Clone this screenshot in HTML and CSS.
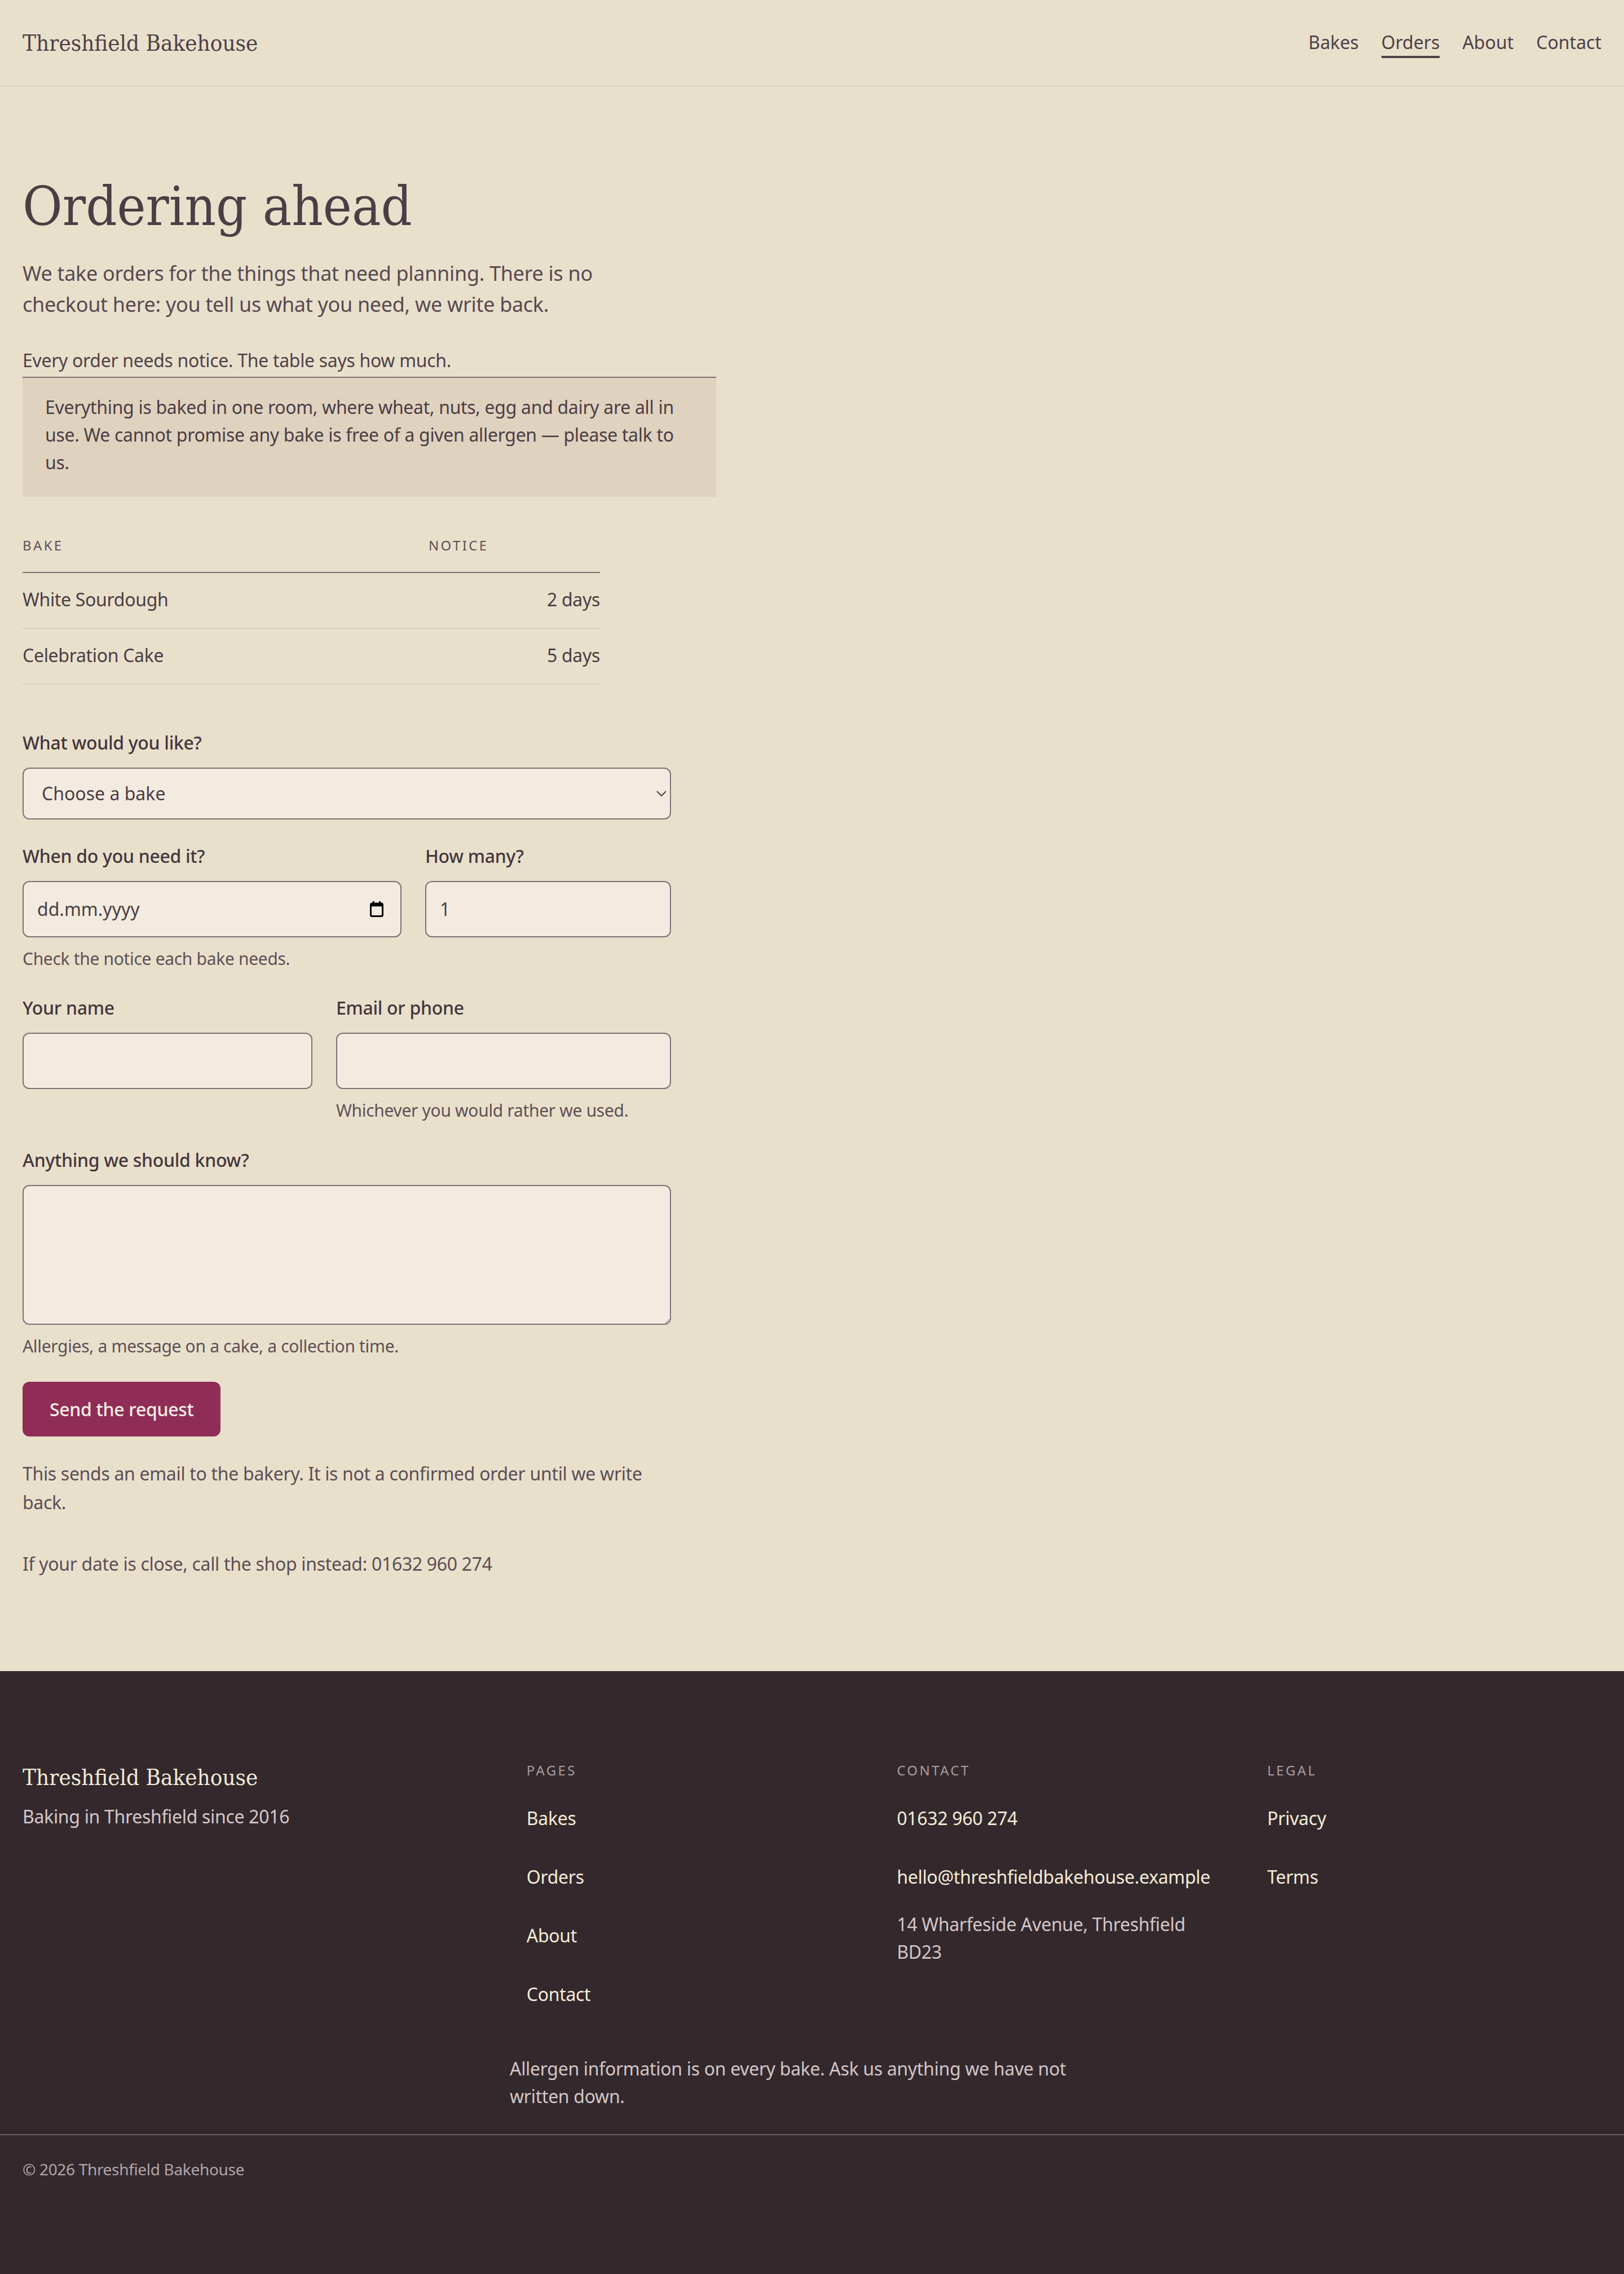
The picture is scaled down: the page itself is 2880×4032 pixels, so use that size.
FILE: index.html
```html
<!DOCTYPE html>
<html lang="en-GB">
<head>
<meta charset="utf-8">
<title>Ordering ahead — Threshfield Bakehouse</title>
<link rel="stylesheet" href="styles.css">
</head>
<body>
<header class="site-header">
  <a class="logo" href="#">Threshfield Bakehouse</a>
  <nav class="main-nav" aria-label="Main">
    <a href="#">Bakes</a>
    <a href="#" class="is-current" aria-current="page">Orders</a>
    <a href="#">About</a>
    <a href="#">Contact</a>
  </nav>
</header>

<main class="page">
  <h1 class="page-title">Ordering ahead</h1>
  <p class="lede">We take orders for the things that need planning. There is no checkout here: you tell us what you need, we write back.</p>

  <p class="caption">Every order needs notice. The table says how much.</p>
  <aside class="allergen-note">
    <p>Everything is baked in one room, where wheat, nuts, egg and dairy are all in use. We cannot promise any bake is free of a given allergen — please talk to us.</p>
  </aside>

  <table class="notice-table">
    <thead>
      <tr><th class="col-bake">Bake</th><th class="col-notice">Notice</th></tr>
    </thead>
    <tbody>
      <tr><td>White Sourdough</td><td class="num">2 days</td></tr>
      <tr><td>Celebration Cake</td><td class="num">5 days</td></tr>
    </tbody>
  </table>

  <form class="order-form" action="#">
    <div class="field">
      <label class="field-label" for="bake">What would you like?</label>
      <select id="bake" class="control control--select">
        <option>Choose a bake</option>
        <option>White Sourdough</option>
        <option>Celebration Cake</option>
      </select>
    </div>

    <div class="field-row field-row--date">
      <div class="field">
        <label class="field-label" for="date">When do you need it?</label>
        <div class="date-wrap">
          <input id="date" class="control" type="text" placeholder="dd.mm.yyyy">
          <svg class="date-icon" width="12" height="14" viewBox="0 0 12 14" aria-hidden="true">
            <rect x="0.75" y="2" width="10.5" height="11.25" rx="1.2" fill="none" stroke="#000" stroke-width="1.5"/>
            <rect x="0.75" y="2" width="10.5" height="2.6" fill="#000"/>
            <rect x="2.4" y="0" width="1.6" height="3.2" fill="#000"/>
            <rect x="8" y="0" width="1.6" height="3.2" fill="#000"/>
          </svg>
        </div>
        <p class="hint">Check the notice each bake needs.</p>
      </div>
      <div class="field">
        <label class="field-label" for="qty">How many?</label>
        <input id="qty" class="control" type="number" value="1" min="1">
      </div>
    </div>

    <div class="field-row field-row--contact">
      <div class="field">
        <label class="field-label" for="name">Your name</label>
        <input id="name" class="control" type="text">
      </div>
      <div class="field">
        <label class="field-label" for="reach">Email or phone</label>
        <input id="reach" class="control" type="text">
        <p class="hint">Whichever you would rather we used.</p>
      </div>
    </div>

    <div class="field">
      <label class="field-label" for="notes">Anything we should know?</label>
      <textarea id="notes" class="control control--area" rows="4"></textarea>
      <p class="hint">Allergies, a message on a cake, a collection time.</p>
    </div>

    <button class="submit" type="submit">Send the request</button>
  </form>

  <p class="form-note">This sends an email to the bakery. It is not a confirmed order until we write back.</p>
  <p class="form-note form-note--call">If your date is close, call the shop instead: 01632 960 274</p>
</main>

<footer class="site-footer">
  <div class="footer-main">
    <div class="footer-grid">
      <div class="footer-brand">
        <p class="footer-brand-name">Threshfield Bakehouse</p>
        <p class="footer-tagline">Baking in Threshfield since 2016</p>
      </div>
      <nav class="footer-col" aria-label="Pages">
        <h2 class="footer-heading">Pages</h2>
        <ul class="footer-links">
          <li><a href="#">Bakes</a></li>
          <li><a href="#">Orders</a></li>
          <li><a href="#">About</a></li>
          <li><a href="#">Contact</a></li>
        </ul>
      </nav>
      <div class="footer-col">
        <h2 class="footer-heading">Contact</h2>
        <ul class="footer-links">
          <li><a href="#">01632 960 274</a></li>
          <li><a href="#">hello@threshfieldbakehouse.example</a></li>
        </ul>
        <p class="footer-address">14 Wharfeside Avenue, Threshfield BD23</p>
      </div>
      <nav class="footer-col" aria-label="Legal">
        <h2 class="footer-heading">Legal</h2>
        <ul class="footer-links">
          <li><a href="#">Privacy</a></li>
          <li><a href="#">Terms</a></li>
        </ul>
      </nav>
    </div>
    <p class="footer-note">Allergen information is on every bake. Ask us anything we have not written down.</p>
  </div>
  <div class="footer-bottom">
    <p>© 2026 Threshfield Bakehouse</p>
  </div>
</footer>
</body>
</html>
```

FILE: styles.css
```css
html {
  zoom: 2;
  background: #33292d;
}

body {
  margin: 0;
  font-family: "Noto Sans", "Liberation Sans", sans-serif;
  font-size: 16px;
  line-height: 1.53;
  letter-spacing: -0.01em;
  color: #4a3d43;
  background: #e9e0cc;
}

/* Header */
.site-header {
  display: flex;
  justify-content: space-between;
  align-items: center;
  padding: 24px 20px;
  border-bottom: 1px solid #dcd2c0;
}

.logo {
  font-family: "DejaVu Serif Condensed", "DejaVu Serif", serif;
  font-stretch: condensed;
  font-size: 20px;
  line-height: 28px;
  letter-spacing: 0;
  color: #4b3f45;
  text-decoration: none;
}

.main-nav {
  display: flex;
  gap: 20px;
}

.main-nav a {
  display: inline-block;
  line-height: 24.5px;
  letter-spacing: 0;
  color: #4d4147;
  text-decoration: none;
  border-bottom: 2px solid transparent;
}

.main-nav a.is-current {
  border-bottom-color: #4d4147;
}

/* Main */
.page {
  padding: 80px 20px 82.5px;
}

.page-title {
  font-family: "DejaVu Serif Condensed", "DejaVu Serif", serif;
  font-stretch: condensed;
  font-size: 48px;
  line-height: 1.1;
  font-weight: 400;
  letter-spacing: 0;
  color: #4b3f45;
  margin: 0 0 18.6px;
}

.lede {
  font-size: 18px;
  line-height: 1.53;
  max-width: 560px;
  margin: 0 0 24px;
  color: #574a50;
}

.caption {
  margin: 0 0 2px;
  color: #4f4248;
}

.allergen-note {
  box-sizing: border-box;
  max-width: 615px;
  background: #dfd2bf;
  border-top: 1px solid #7f7074;
  padding: 14px 20px 18px;
}

.allergen-note p {
  margin: 0;
}

/* Table */
.notice-table {
  width: 512px;
  table-layout: fixed;
  border-collapse: collapse;
  margin-top: 22px;
}

.notice-table th {
  text-align: left;
  font-size: 12px;
  line-height: 18.4px;
  font-weight: 400;
  letter-spacing: 0.14em;
  text-transform: uppercase;
  color: #5d5055;
  padding: 12px 0 14px;
  border-bottom: 1px solid #7f7074;
}

.notice-table .col-bake {
  width: 360px;
}

.notice-table td {
  padding: 11px 0 13px;
  line-height: 24.5px;
  border-bottom: 1px solid #d8cdbb;
}

.notice-table td.num {
  text-align: right;
}

/* Form */
.order-form {
  display: flex;
  flex-direction: column;
  gap: 20px;
  max-width: 575px;
  margin-top: 39px;
}

.field {
  display: flex;
  flex-direction: column;
  min-width: 0;
}

.field-row {
  display: grid;
  gap: 21px;
}

.field-row--date {
  grid-template-columns: 1fr 218px;
}

.field-row--contact {
  grid-template-columns: 257px 1fr;
}

.field-label {
  display: block;
  font-weight: 500;
  line-height: 24.5px;
  color: #43363c;
  margin-bottom: 10px;
}

.control {
  box-sizing: border-box;
  width: 100%;
  height: 50px;
  margin: 0;
  padding: 12px;
  font: inherit;
  line-height: 24px;
  letter-spacing: 0;
  color: #4a3d43;
  background: #f3ebe0;
  border: 1px solid #7f7175;
  border-radius: 6px;
}

.control::placeholder {
  color: #4a3d43;
  opacity: 1;
}

.control--select {
  height: 46px;
  padding: 0 12px;
}

.control--area {
  height: 124px;
  resize: vertical;
}

.date-wrap {
  position: relative;
}

.date-icon {
  position: absolute;
  right: 16px;
  top: 18px;
}

.hint {
  margin: 7.5px 0 0;
  font-size: 15px;
  line-height: 1.53;
  color: #5d5055;
}

.submit {
  align-self: flex-start;
  margin: 0;
  padding: 12px 24px;
  font: inherit;
  font-weight: 500;
  line-height: 24.5px;
  letter-spacing: -0.01em;
  color: #f8efe4;
  background: #8f2d57;
  border: 0;
  border-radius: 6px;
}

.form-note {
  max-width: 575px;
  margin: 20.6px 0 0;
  line-height: 1.57;
  color: #5b4e54;
}

.form-note--call {
  margin-top: 29.5px;
}

/* Footer */
.site-footer {
  background: #33292d;
  color: #d5c8cb;
}

.footer-main {
  padding: 78.7px 20px 21px;
}

.footer-grid {
  display: grid;
  grid-template-columns: 1.4fr 1fr 1fr 1fr;
  gap: 32px;
}

.footer-brand-name {
  font-family: "DejaVu Serif Condensed", "DejaVu Serif", serif;
  font-stretch: condensed;
  font-size: 20px;
  line-height: 30px;
  letter-spacing: 0;
  color: #f4ebd9;
  margin: 0;
}

.footer-tagline {
  margin: 8px 0 0;
  color: #d5c8cb;
}

.footer-heading {
  margin: 0 0 11px;
  font-size: 12px;
  line-height: 18.4px;
  font-weight: 400;
  letter-spacing: 0.14em;
  text-transform: uppercase;
  color: #a99ca0;
}

.footer-links {
  list-style: none;
  margin: 0;
  padding: 0;
  display: flex;
  flex-direction: column;
  gap: 7.5px;
}

.footer-links a {
  display: block;
  padding: 10px 0;
  line-height: 24.5px;
  color: #f5ecd9;
  text-decoration: none;
}

.footer-address {
  margin: 8px 0 0;
  color: #d3c6c8;
}

.footer-note {
  max-width: 536px;
  margin: 32px auto 0;
  color: #d3c6c8;
}

.footer-bottom {
  border-top: 1px solid #675c60;
  padding: 19.3px 20px 80.7px;
}

.footer-bottom p {
  margin: 0;
  font-size: 14px;
  color: #b2a5aa;
}
```
